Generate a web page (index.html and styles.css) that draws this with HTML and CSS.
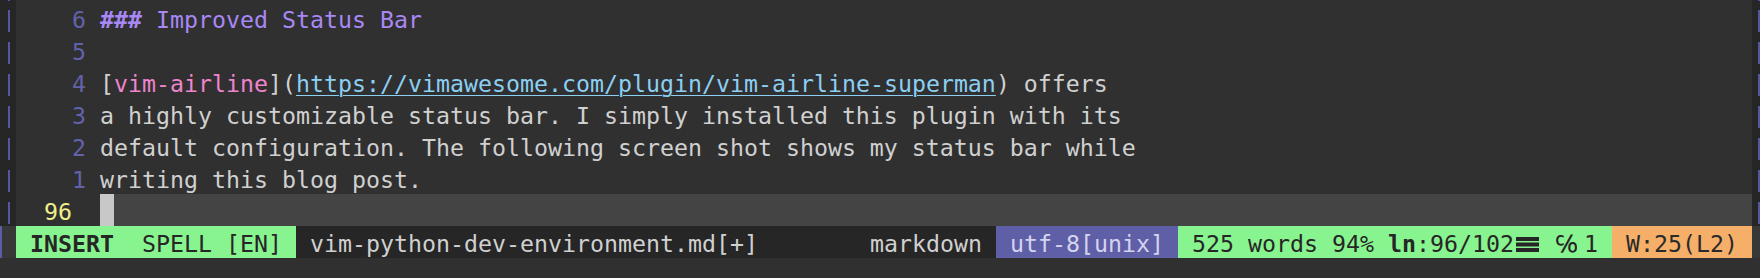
FILE: index.html
```html
<!DOCTYPE html>
<html>
<head>
<meta charset="utf-8">
<title>vim</title>
<link rel="stylesheet" href="styles.css">
</head>
<body>
<div class="screen">
  <div class="row row-top">
    <div class="edge-l edge-top"><i class="bar bar-top"></i></div>
    <div class="fill"></div>
    <div class="edge-r edge-top"><i class="bar bar-top"></i></div>
  </div>
  <div class="row">
    <div class="edge-l"><i class="bar"></i></div>
    <div class="gutter">6</div>
    <div class="text"><span class="h-mark">###</span><span class="h"> Improved Status Bar</span></div>
    <div class="edge-r"><i class="bar"></i></div>
  </div>
  <div class="row">
    <div class="edge-l"><i class="bar"></i></div>
    <div class="gutter">5</div>
    <div class="text"></div>
    <div class="edge-r"><i class="bar"></i></div>
  </div>
  <div class="row">
    <div class="edge-l"><i class="bar"></i></div>
    <div class="gutter">4</div>
    <div class="text">[<span class="link">vim-airline</span>](<span class="url">https://vimawesome.com/plugin/vim-airline-superman</span>) offers</div>
    <div class="edge-r"><i class="bar"></i></div>
  </div>
  <div class="row">
    <div class="edge-l"><i class="bar"></i></div>
    <div class="gutter">3</div>
    <div class="text">a highly customizable status bar. I simply installed this plugin with its</div>
    <div class="edge-r"><i class="bar"></i></div>
  </div>
  <div class="row">
    <div class="edge-l"><i class="bar"></i></div>
    <div class="gutter">2</div>
    <div class="text">default configuration. The following screen shot shows my status bar while</div>
    <div class="edge-r"><i class="bar"></i></div>
  </div>
  <div class="row">
    <div class="edge-l"><i class="bar"></i></div>
    <div class="gutter">1</div>
    <div class="text">writing this blog post.</div>
    <div class="edge-r"><i class="bar"></i></div>
  </div>
  <div class="row">
    <div class="edge-l"><i class="bar"></i></div>
    <div class="gutter gutter-cur">96</div>
    <div class="text text-cur"><div class="cursor"></div></div>
    <div class="edge-r"><i class="bar"></i></div>
  </div>
  <div class="status">
    <div class="st-edge-l"></div>
    <div class="seg seg-mode"> <b>INSERT</b>  SPELL [EN] </div>
    <div class="seg seg-file"><span> vim-python-dev-environment.md[+]</span><span>markdown </span></div>
    <div class="seg seg-enc"> utf-8[unix] </div>
    <div class="seg seg-pos"> 525 words 94% <b class="ln">ln</b>:96/102<svg class="menu" width="28" height="28" viewBox="0 0 28 28"><rect x="2" y="7" width="23" height="4"/><rect x="2" y="12.5" width="23" height="4"/><rect x="2" y="18" width="23" height="4"/></svg> <span class="colnr"><span class="colnr-glyph">℅</span></span>1 </div>
    <div class="seg seg-warn"> W:25(L2) </div>
    <div class="st-edge-r"></div>
  </div>
</div>
</body>
</html>
```
FILE: styles.css
```css
html, body {
  margin: 0;
  padding: 0;
}
body {
  background: #303030;
  font-family: "DejaVu Sans Mono", monospace;
  font-size: 23.254px;
}
.screen {
  width: 1760px;
}
.row {
  display: flex;
  height: 32px;
}
.row-top {
  height: 2px;
}
.fill {
  flex: 1;
}
.edge-l {
  width: 16px;
  flex: none;
  box-sizing: border-box;
  background: #262626;
  padding: 8px 0 0 8px;
}
.edge-r {
  width: 8px;
  flex: none;
  box-sizing: border-box;
  background: #262626;
  padding: 8px 0 0 6px;
}
.edge-top {
  padding-top: 0;
}
.bar {
  display: block;
  width: 2px;
  height: 22px;
  background: #5656a0;
}
.bar-top {
  height: 1px;
}
.gutter {
  width: 84px;
  flex: none;
  box-sizing: border-box;
  padding: 4px 14px 0 0;
  line-height: 28px;
  text-align: right;
  color: #6262aa;
  white-space: pre;
}
.gutter-cur {
  text-align: left;
  padding: 4px 0 0 28px;
  color: #eeee8a;
}
.text {
  flex: 1;
  padding-top: 4px;
  line-height: 28px;
  color: #d0d0d0;
  white-space: pre;
}
.text-cur {
  padding-top: 0;
  background: #444444;
}
.cursor {
  width: 14px;
  height: 32px;
  background: #c8c8c8;
}
.h-mark {
  color: #a888f5;
  font-weight: bold;
}
.h {
  color: #a888f5;
}
.link {
  color: #ee84cc;
}
.url {
  color: #8ccff2;
  text-decoration: underline;
  text-decoration-thickness: 1px;
  text-underline-offset: 3px;
}
.status {
  display: flex;
  height: 32px;
  line-height: 28px;
  white-space: pre;
}
.st-edge-l {
  width: 16px;
  flex: none;
  box-sizing: border-box;
  background: #383838;
  border-left: 2px solid #5c5ca8;
}
.st-edge-r {
  width: 8px;
  flex: none;
  background: #383838;
}
.seg {
  flex: none;
  box-sizing: border-box;
  height: 32px;
  padding-top: 4px;
  overflow: hidden;
}
.seg-mode {
  width: 280px;
  background: #88f48f;
  color: #262626;
}
.seg-file {
  width: 700px;
  background: #262626;
  color: #d0d0d0;
  display: flex;
  justify-content: space-between;
}
.seg-enc {
  width: 182px;
  background: #5f5fa8;
  color: #d4d4ee;
}
.seg-pos {
  width: 434px;
  background: #88f48f;
  color: #262626;
}
.seg-warn {
  width: 140px;
  background: #f5af68;
  color: #2a2a2a;
}
.menu {
  vertical-align: top;
  fill: #262626;
}
.colnr {
  display: inline-block;
  width: 28px;
}
.colnr-glyph {
  display: inline-block;
  transform: scaleX(1.5);
  transform-origin: left center;
}
```
